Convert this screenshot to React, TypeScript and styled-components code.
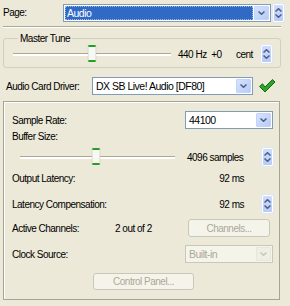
import React from 'react'
import { styled, createGlobalStyle } from 'styled-components'

const GlobalStyle = createGlobalStyle`
  html, body {
    margin: 0;
    padding: 0;
    background: #ece9d8;
  }
  body {
    font-family: 'Liberation Sans', Arial, sans-serif;
    font-size: 10px;
    letter-spacing: -0.5px;
    color: #000;
  }
`

const Page = styled.div`
  width: 290px;
  height: 306px;
  box-sizing: border-box;
  padding: 3px 0 0 3px;
  background: #ece9d8;
  display: flex;
  flex-direction: column;
  overflow: hidden;
`

const Row = styled.div<{ $h?: number; $mt?: number }>`
  display: flex;
  align-items: center;
  height: ${(p) => p.$h ?? 18}px;
  margin-top: ${(p) => p.$mt ?? 0}px;
`

const Label = styled.span<{ $w?: number; $pl?: number }>`
  flex: ${(p) => (p.$w ? `0 0 ${p.$w}px` : '1 1 auto')};
  padding-left: ${(p) => p.$pl ?? 0}px;
  white-space: nowrap;
`

const Text = styled.span<{ $w?: number; $mr?: number; $align?: string }>`
  white-space: nowrap;
  width: ${(p) => (p.$w ? `${p.$w}px` : 'auto')};
  margin-right: ${(p) => p.$mr ?? 0}px;
  text-align: ${(p) => p.$align ?? 'left'};
`

const Separator = styled.div`
  width: 278px;
  height: 0;
  border-top: 1px solid #aca899;
  border-bottom: 1px solid #fff;
  margin-top: 4px;
`

const GroupBox = styled.fieldset`
  margin: 4px 0 0 0;
  padding: 0 8px 4px 9px;
  width: 278px;
  box-sizing: border-box;
  border: 1px solid #d0d0bf;
  border-radius: 3px;
  min-width: 0;
`

const Legend = styled.legend`
  padding: 0 2px;
  margin-left: 5px;
  line-height: 13px;
`

const Panel = styled.div`
  margin-top: 6px;
  width: 277px;
  height: 199px;
  box-sizing: border-box;
  border: 1px solid #a5a497;
  box-shadow: inset 1px 1px 0 #fff;
  padding: 0 6px 0 8px;
  display: flex;
  flex-direction: column;
`

/* combo box */
const Combo = styled.div<{ $w: number; $disabled?: boolean }>`
  width: ${(p) => p.$w}px;
  height: 18px;
  box-sizing: border-box;
  border: 1px solid ${(p) => (p.$disabled ? '#c9c7ba' : '#7f9db9')};
  background: ${(p) => (p.$disabled ? '#f5f4ea' : '#fff')};
  display: flex;
  align-items: stretch;
  padding: 1px;
  flex: 0 0 auto;
`

const ComboValue = styled.div<{ $selected?: boolean; $disabled?: boolean }>`
  flex: 1;
  display: flex;
  align-items: center;
  padding-left: 2px;
  margin-right: 1px;
  background: ${(p) => (p.$selected ? '#316ac5' : 'transparent')};
  color: ${(p) => (p.$selected ? '#fff' : p.$disabled ? '#aca899' : '#000')};
  outline: ${(p) => (p.$selected ? '1px dotted #9fb8e6' : 'none')};
  outline-offset: -1px;
  font-size: 10.5px;
`

const DropButton = styled.div<{ $disabled?: boolean }>`
  width: 15px;
  box-sizing: border-box;
  border: 1px solid ${(p) => (p.$disabled ? '#e8e6da' : '#c2d3fc')};
  border-radius: 1px;
  background: ${(p) =>
    p.$disabled ? '#f0efe6' : 'linear-gradient(135deg, #d7e3fd 0%, #b6cbf8 100%)'};
  display: flex;
  align-items: center;
  justify-content: center;
`

const Chevron = ({ up, color = '#4d6185' }: { up?: boolean; color?: string }) => (
  <svg width="7" height="4" viewBox="0 0 7 4">
    <path
      d={up ? 'M0.5 3.5 L3.5 0.7 L6.5 3.5' : 'M0.5 0.5 L3.5 3.3 L6.5 0.5'}
      fill="none"
      stroke={color}
      strokeWidth="1.5"
    />
  </svg>
)

const ComboBox = ({
  value,
  width,
  selected,
  disabled,
}: {
  value: string
  width: number
  selected?: boolean
  disabled?: boolean
}) => (
  <Combo $w={width} $disabled={disabled}>
    <ComboValue $selected={selected} $disabled={disabled}>
      {value}
    </ComboValue>
    <DropButton $disabled={disabled}>
      <Chevron color={disabled ? '#c9c7ba' : '#4d6185'} />
    </DropButton>
  </Combo>
)

/* spin buttons */
const Spin = styled.div`
  width: 11px;
  height: 18px;
  box-sizing: border-box;
  border: 1px solid #fff;
  border-radius: 2px;
  background: linear-gradient(180deg, #cfdcfc 0%, #b7cbf7 100%);
  box-shadow: 0 0 0 1px #dfe6f5;
  display: flex;
  flex-direction: column;
  align-items: center;
  justify-content: space-around;
  padding: 2px 0;
  flex: 0 0 auto;
`

const SpinButton = () => (
  <Spin>
    <Chevron up />
    <Chevron />
  </Spin>
)

/* trackbar */
const Track = styled.div<{ $w: number }>`
  position: relative;
  width: ${(p) => p.$w}px;
  height: 18px;
  flex: 0 0 auto;
  &::before {
    content: '';
    position: absolute;
    left: 0;
    right: 0;
    top: 8px;
    height: 1px;
    background: #aca899;
    border-bottom: 2px solid #fff;
  }
`

const Thumb = styled.div`
  position: absolute;
  top: 0;
  width: 9px;
  height: 17px;
  box-sizing: border-box;
  border: 1px solid #b3b1a6;
  border-radius: 2px;
  background: #f7f7f3;
  border-top: 2px solid #21a121;
  border-bottom: 2px solid #21a121;
  transform: translateX(-50%);
`

const Slider = ({ width, pos }: { width: number; pos: number }) => (
  <Track $w={width}>
    <Thumb style={{ left: `${pos * 100}%` }} />
  </Track>
)

const CheckIcon = () => (
  <svg width="18" height="16" viewBox="0 0 18 16">
    <path
      d="M1.5 8.5 L4.5 5.8 L7 9 L14.5 1.5 L17 4 L7 14 Z"
      fill="#2ea42e"
      stroke="#146b14"
      strokeWidth="1"
      strokeLinejoin="round"
    />
  </svg>
)

const Button = styled.div<{ $w: number; $h?: number }>`
  width: ${(p) => p.$w}px;
  height: ${(p) => p.$h ?? 18}px;
  box-sizing: border-box;
  border: 1px solid #c9c7ba;
  border-radius: 3px;
  background: #f5f4ea;
  color: #aca899;
  display: flex;
  align-items: center;
  justify-content: center;
  flex: 0 0 auto;
`

const Spacer = styled.div`
  flex: 1;
`

export default function App() {
  return (
    <>
      <GlobalStyle />
      <Page>
        <Row $h={19}>
          <Label $w={60}>Page:</Label>
          <ComboBox value="Audio" width={208} selected />
          <div style={{ width: 2 }} />
          <SpinButton />
        </Row>
        <Separator />
        <GroupBox>
          <Legend>Master Tune</Legend>
          <Row>
            <Slider width={158} pos={0.5} />
            <Text $w={58} style={{ marginLeft: 7 }}>440 Hz&nbsp;&nbsp;+0</Text>
            <Text>cent</Text>
            <Spacer />
            <SpinButton />
          </Row>
        </GroupBox>
        <Row $mt={9}>
          <Label $w={86} $pl={3}>Audio Card Driver:</Label>
          <ComboBox value="DX SB Live! Audio [DF80]" width={161} />
          <div style={{ width: 5 }} />
          <CheckIcon />
        </Row>
        <Panel>
          <Row $mt={9}>
            <Label>Sample Rate:</Label>
            <ComboBox value="44100" width={88} />
          </Row>
          <Row $h={14}>
            <Label>Buffer Size:</Label>
          </Row>
          <Row $mt={5}>
            <Spacer style={{ flex: '0 0 8px' }} />
            <Slider width={155} pos={0.49} />
            <Text style={{ marginLeft: 12 }}>4096 samples</Text>
            <Spacer />
            <SpinButton />
          </Row>
          <Row $h={16} $mt={4}>
            <Label>Output Latency:</Label>
            <Text $mr={29}>92 ms</Text>
          </Row>
          <Row $mt={9}>
            <Label>Latency Compensation:</Label>
            <Text $mr={18}>92 ms</Text>
            <SpinButton />
          </Row>
          <Row $mt={6}>
            <Label $w={103}>Active Channels:</Label>
            <Text>2 out of 2</Text>
            <Spacer />
            <Button $w={82}>Channels...</Button>
            <div style={{ width: 3 }} />
          </Row>
          <Row $mt={8}>
            <Label>Clock Source:</Label>
            <ComboBox value="Built-in" width={88} disabled />
          </Row>
          <Row $h={17} $mt={10}>
            <Spacer style={{ flex: '0 0 81px' }} />
            <Button $w={101} $h={17}>Control Panel...</Button>
          </Row>
        </Panel>
      </Page>
    </>
  )
}
